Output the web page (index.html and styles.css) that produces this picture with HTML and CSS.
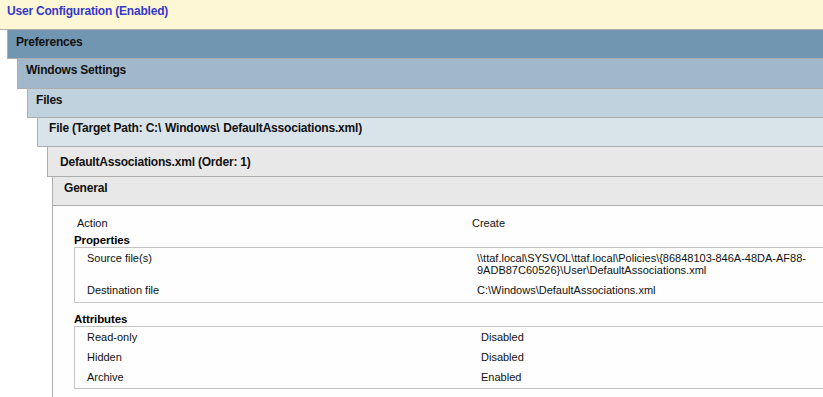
FILE: index.html
```html
<!DOCTYPE html>
<html lang="en">
<head>
  <meta charset="UTF-8">
  <meta name="viewport" content="width=device-width, initial-scale=1.0">
  <title>User Configuration Report</title>
  <link rel="stylesheet" href="styles.css">
</head>
<body>

  <div class="report-title">User Configuration (Enabled)</div>

  <div class="level level-top">
    <div class="bar bar-pref">Preferences</div>
    <div class="level">
      <div class="bar bar-windows">Windows Settings</div>
      <div class="level">
        <div class="bar bar-files">Files</div>
        <div class="level">
          <div class="bar bar-file">File (Target Path: C:<span class="sep">\</span>Windows<span class="sep">\</span>DefaultAssociations.xml)</div>
          <div class="level">
            <div class="bar bar-item">DefaultAssociations.xml (Order: 1)</div>
            <div class="level level-small">
              <div class="bar bar-general">General</div>

              <!-- General settings -->
              <div class="content">
                <div class="row row-plain">
                  <div class="label">Action</div>
                  <div class="value">Create</div>
                </div>

                <div class="subhead">Properties</div>
                <div class="box box-props">
                  <div class="row">
                    <div class="label">Source file(s)</div>
                    <div class="value value-path">\\ttaf.local\SYSVOL\ttaf.local\Policies\{86848103-846A-48DA-AF88-<br>9ADB87C60526}\User\DefaultAssociations.xml</div>
                  </div>
                  <div class="row">
                    <div class="label">Destination file</div>
                    <div class="value">C:\Windows\DefaultAssociations.xml</div>
                  </div>
                </div>

                <div class="subhead subhead-gap">Attributes</div>
                <div class="box box-attrs">
                  <div class="row">
                    <div class="label">Read-only</div>
                    <div class="value">Disabled</div>
                  </div>
                  <div class="row">
                    <div class="label">Hidden</div>
                    <div class="value">Disabled</div>
                  </div>
                  <div class="row">
                    <div class="label">Archive</div>
                    <div class="value">Enabled</div>
                  </div>
                </div>
              </div>

            </div>
          </div>
        </div>
      </div>
    </div>
  </div>

</body>
</html>
```

FILE: styles.css
```css
/* General Styles */
body {
  font-family: 'Liberation Sans', Arial, sans-serif;
  background-color: #fff;
  color: #111;
  margin: 0;
  padding: 0;
  overflow: hidden;
  height: 397px;
}

.report-title {
  height: 25px;
  padding: 4px 0 0 7px;
  background-color: #fef7d5;
  border-bottom: 1px solid #adadad;
  color: #3737c8;
  font-size: 12px;
  font-weight: bold;
  line-height: 14px;
  letter-spacing: -0.2px;
}

/* Nested section bars */
.level {
  margin-left: 10px;
}

.level-top {
  margin-left: 7px;
}

.level-small {
  margin-left: 5px;
}

.bar {
  box-sizing: border-box;
  border-left: 1px solid #adadad;
  border-bottom: 1px solid #adadad;
  font-size: 12px;
  font-weight: bold;
  line-height: 14px;
  letter-spacing: -0.2px;
  color: #111;
  white-space: nowrap;
}

.bar .sep {
  margin-right: 4px;
}

.bar-pref {
  height: 29px;
  padding: 5px 0 0 8px;
  background-color: #7096b2;
}

.bar-windows {
  height: 30px;
  padding: 4px 0 0 8px;
  background-color: #a1b8cb;
}

.bar-files {
  height: 29px;
  padding: 4px 0 0 8px;
  background-color: #c0d2de;
}

.bar-file {
  height: 29px;
  padding: 3px 0 0 11px;
  background-color: #d9e3ea;
}

.bar-item {
  height: 30px;
  padding: 8px 0 0 12px;
  background-color: #e8e8e8;
}

.bar-general {
  height: 29px;
  padding: 4px 0 0 11px;
  background-color: #e8e8e8;
}

/* General content */
.content {
  border-left: 1px solid #adadad;
  background-color: #fefefe;
  padding: 11px 0 20px 21px;
  font-size: 11px;
  line-height: 13px;
}

.row {
  display: flex;
  padding: 4px 0 4px 0;
}

.row .label {
  flex: none;
}

.row .value {
  white-space: nowrap;
}

.row-plain {
  padding: 0;
}

.row-plain .label {
  width: 398px;
  padding-left: 3px;
  box-sizing: border-box;
}

.subhead {
  margin-top: 4px;
  font-size: 11.5px;
  font-weight: bold;
  line-height: 13px;
  letter-spacing: -0.1px;
  color: #000;
}

.subhead-gap {
  margin-top: 10px;
}

.box {
  border-top: 1px solid #c4c4c4;
  border-left: 1px solid #c4c4c4;
  border-bottom: 1px solid #c4c4c4;
  padding-bottom: 1px;
}

.box .label {
  padding-left: 12px;
  box-sizing: border-box;
}

.box-props .label {
  width: 402px;
}

.box-attrs .label {
  width: 406px;
}

.box-attrs .row {
  padding: 4px 0 3px 0;
}

.value-path {
  line-height: 12px;
}
```
